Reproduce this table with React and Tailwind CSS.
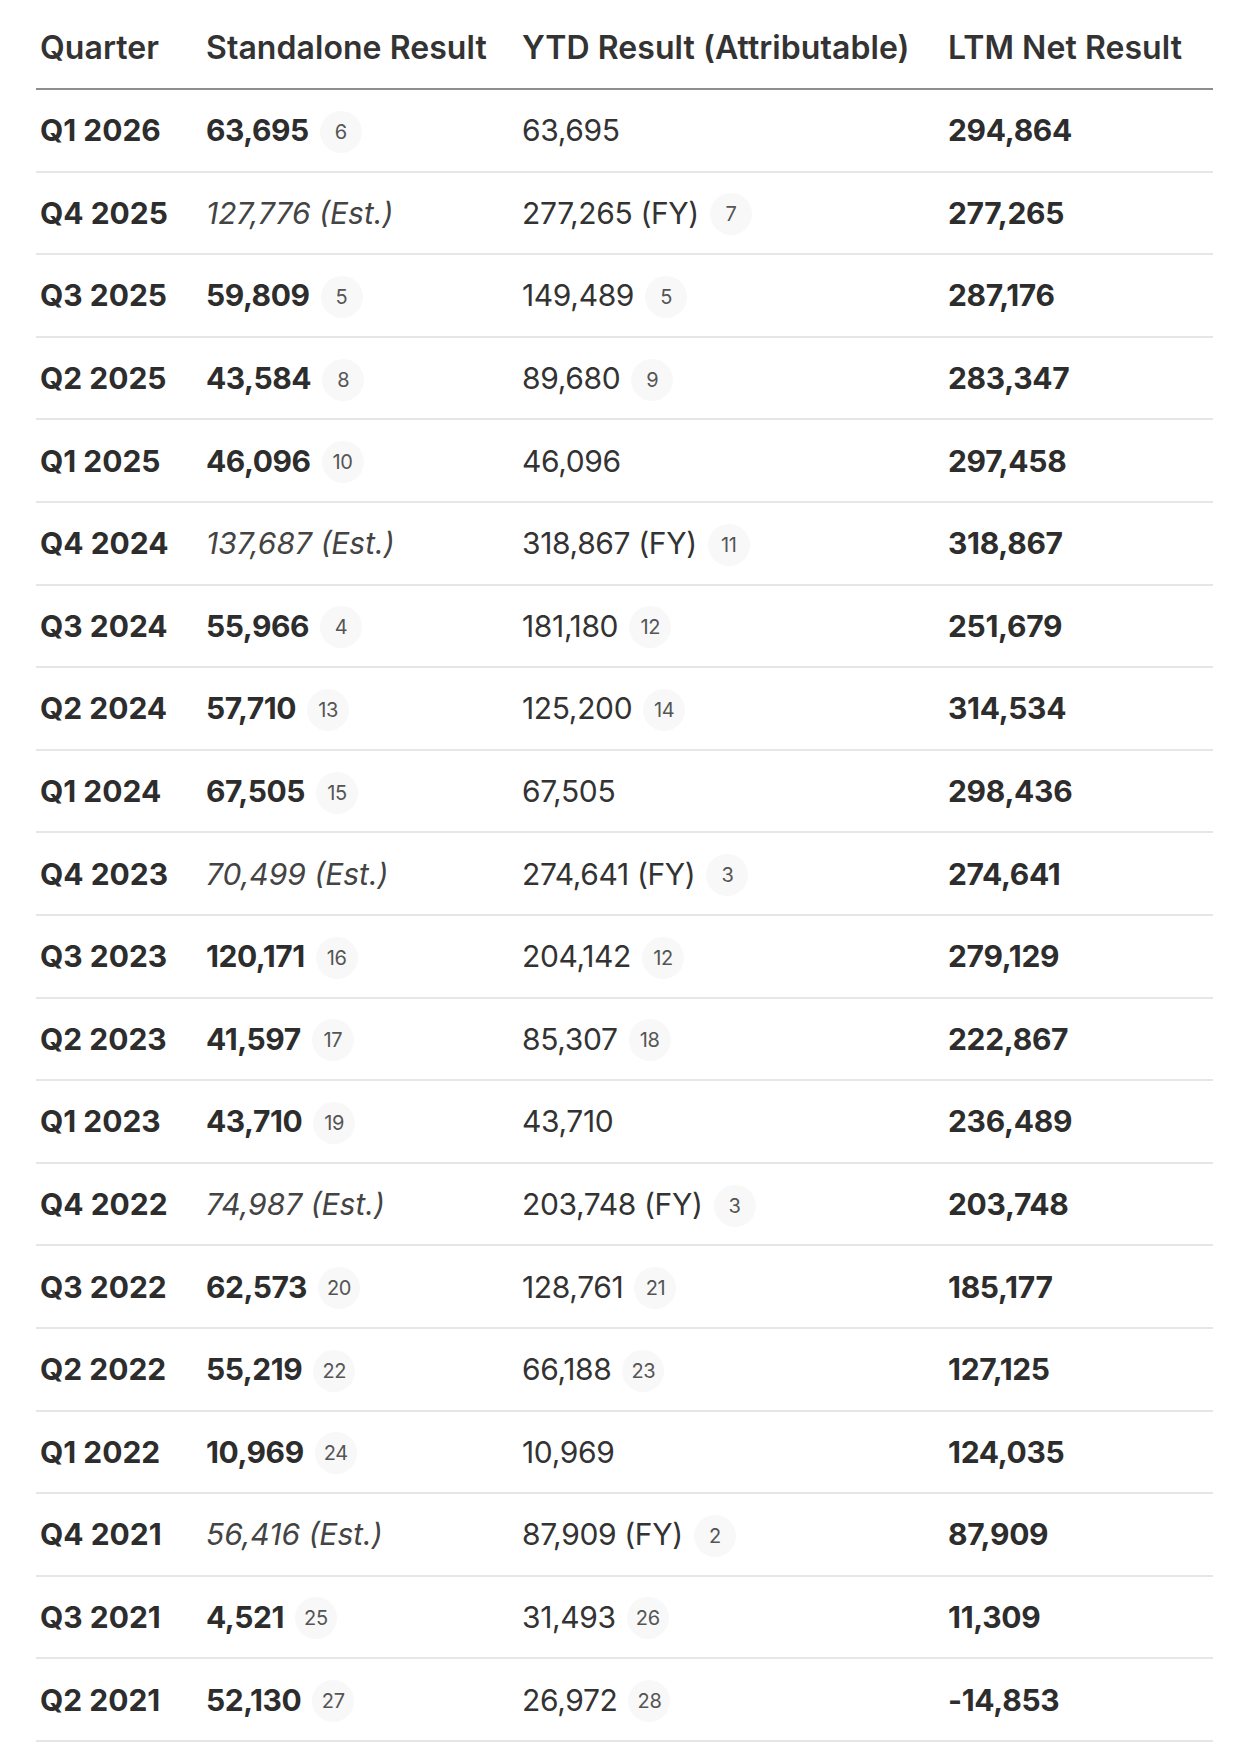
const rows = [
  ['Q1 2026', '63,695', false, '6', '63,695', null, '294,864'],
  ['Q4 2025', '127,776 (Est.)', true, null, '277,265 (FY)', '7', '277,265'],
  ['Q3 2025', '59,809', false, '5', '149,489', '5', '287,176'],
  ['Q2 2025', '43,584', false, '8', '89,680', '9', '283,347'],
  ['Q1 2025', '46,096', false, '10', '46,096', null, '297,458'],
  ['Q4 2024', '137,687 (Est.)', true, null, '318,867 (FY)', '11', '318,867'],
  ['Q3 2024', '55,966', false, '4', '181,180', '12', '251,679'],
  ['Q2 2024', '57,710', false, '13', '125,200', '14', '314,534'],
  ['Q1 2024', '67,505', false, '15', '67,505', null, '298,436'],
  ['Q4 2023', '70,499 (Est.)', true, null, '274,641 (FY)', '3', '274,641'],
  ['Q3 2023', '120,171', false, '16', '204,142', '12', '279,129'],
  ['Q2 2023', '41,597', false, '17', '85,307', '18', '222,867'],
  ['Q1 2023', '43,710', false, '19', '43,710', null, '236,489'],
  ['Q4 2022', '74,987 (Est.)', true, null, '203,748 (FY)', '3', '203,748'],
  ['Q3 2022', '62,573', false, '20', '128,761', '21', '185,177'],
  ['Q2 2022', '55,219', false, '22', '66,188', '23', '127,125'],
  ['Q1 2022', '10,969', false, '24', '10,969', null, '124,035'],
  ['Q4 2021', '56,416 (Est.)', true, null, '87,909 (FY)', '2', '87,909'],
  ['Q3 2021', '4,521', false, '25', '31,493', '26', '11,309'],
  ['Q2 2021', '52,130', false, '27', '26,972', '28', '-14,853'],
];

// footnote marker next to a value
const Ref = ({ n }) => (
  <span className="ml-[11px] mt-[3px] inline-flex h-[42px] min-w-[42px] items-center justify-center rounded-full bg-[#f8f8f8] px-[6px] text-[20px] font-normal not-italic tracking-[-0.02em] text-[#555]">
    {n}
  </span>
);

const App = () => {
  return (
    <div className="min-h-screen bg-white pl-[36px] pr-[27px] font-['Inter',sans-serif] text-[30px] leading-[36px] text-[#2d2d2d]">
      <div className="grid h-[90px] grid-cols-[166px_316px_426px_1fr] items-center border-b-2 border-[#8e8e8e] pt-[8px] text-[32px] font-semibold tracking-[0.002em] text-[#333]">
        <div className="pl-[4px]">Quarter</div>
        <div className="pl-[4px]">Standalone Result</div>
        <div className="pl-[4px]">YTD Result (Attributable)</div>
        <div className="pl-[4px]">LTM Net Result</div>
      </div>

      {rows.map(([q, sa, est, saRef, ytd, ytdRef, ltm]) => (
        <div key={q} className="grid h-[82.6px] grid-cols-[166px_316px_426px_1fr] items-center border-b-2 border-[#e4e6e9]">
          <div className="pl-[4px] font-bold">{q}</div>
          <div className="flex items-center pl-[4px]">
            {est ? (
              <span className="italic text-[#444]">{sa}</span>
            ) : (
              <span className="font-bold tracking-[-0.015em]">{sa}</span>
            )}
            {saRef && <Ref n={saRef} />}
          </div>
          <div className="flex items-center pl-[4px] tracking-[-0.012em] text-[#333]">
            <span>{ytd}</span>
            {ytdRef && <Ref n={ytdRef} />}
          </div>
          <div className="pl-[4px] font-bold tracking-[-0.01em]">{ltm}</div>
        </div>
      ))}
    </div>
  );
};

export default App;
